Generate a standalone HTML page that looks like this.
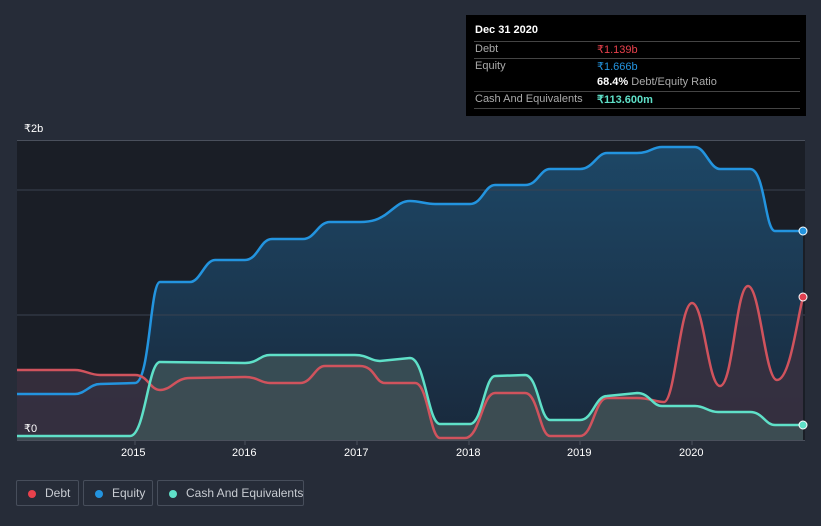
<!DOCTYPE html><html><head><meta charset="utf-8"><style>
body{margin:0;width:821px;height:526px;background:#262c38;font-family:"Liberation Sans",sans-serif;overflow:hidden;position:relative}
.tip{position:absolute;left:466px;top:15px;width:340px;height:101px;background:#000;color:#fff;font-size:11px}
.tip .r{position:absolute;left:8px;width:326px;border-top:1px solid #444}
.tip span{position:absolute;white-space:nowrap}
.leg{position:absolute;top:480px;height:26px;border:1px solid #474e5b;border-radius:2px;color:#c8ccd2;font-size:12px;line-height:24px;box-sizing:border-box;white-space:nowrap}
.leg i{position:absolute;left:11px;top:9px;width:8px;height:8px;border-radius:50%}
.ax{position:absolute;color:#fff;font-size:11px}
</style></head><body>
<svg width="821" height="526" style="position:absolute;left:0;top:0">
<defs>
<linearGradient id="ge" x1="0" y1="0" x2="0" y2="1"><stop offset="0" stop-color="#1d4766"/><stop offset="1" stop-color="#19293c"/></linearGradient>
</defs>
<rect x="17" y="140" width="788" height="300" fill="#1a1e26"/>
<path d="M17,394 L75,394 C85,394 90,384 100,384 L135,383 C150,383 150,282 160,282 L190,282 C200,282 205,260 215,260 L245,260 C258,260 260,239 272,239 L303,239 C315,239 318,222 330,222 L360,222 C375,222 380,218 385,215 C395,208 400,201 410,201 C420,201 425,204 435,204 L470,204 C482,204 485,185 495,185 L525,185 C538,185 540,169 550,169 L580,169 C593,169 597,153 607,153 L637,153 C650,153 652,147 662,147 L695,147 C705,147 710,169 720,169 L750,169 C765,169 765,231 775,231 L803,231 L803,440 L17,440Z" fill="url(#ge)"/>
<line x1="17" y1="190" x2="805" y2="190" stroke="#3a4250" stroke-width="1"/>
<line x1="17" y1="315" x2="805" y2="315" stroke="#3a4250" stroke-width="1"/>
<line x1="17" y1="140.5" x2="805" y2="140.5" stroke="#4a505c" stroke-width="1"/>
<path d="M17,370 L75,370 C85,370 90,375 100,375 L135,375 C148,375 150,390 160,390 C172,390 175,378 190,378 L245,377 C258,377 260,383 270,383 L300,383 C312,383 315,366 325,366 L360,366 C375,366 375,383 385,383 L415,383 C428,383 430,438 440,438 L465,438 C480,438 482,393 495,393 L525,393 C538,393 540,436 550,436 L580,436 C593,436 595,398 607,398 L637,398 C650,398 655,402 664,402 C675,402 680,303 692,303 C704,303 708,386 720,386 C733,386 736,286 748,286 C760,286 765,380 777,380 C790,380 797,320 803,297 L803,440 L17,440Z" fill="#3a3040" fill-opacity="0.85"/>
<path d="M17,436 L130,436 C145,436 148,362 160,362 L245,363 C258,363 260,355 270,355 L355,355 C368,355 370,361 380,361 L410,358 C425,358 428,424 440,424 L470,424 C482,424 485,376 495,376 L525,375 C538,375 540,420 550,420 L580,420 C593,420 595,396 607,396 L637,393 C650,393 652,406 662,406 L695,406 C705,406 708,412 718,412 L750,412 C763,412 765,425 775,425 L803,425 L803,440 L17,440Z" fill="#3f5458" fill-opacity="0.8"/>
<g fill="none" stroke-width="2.5" stroke-linejoin="round">
<path d="M17,394 L75,394 C85,394 90,384 100,384 L135,383 C150,383 150,282 160,282 L190,282 C200,282 205,260 215,260 L245,260 C258,260 260,239 272,239 L303,239 C315,239 318,222 330,222 L360,222 C375,222 380,218 385,215 C395,208 400,201 410,201 C420,201 425,204 435,204 L470,204 C482,204 485,185 495,185 L525,185 C538,185 540,169 550,169 L580,169 C593,169 597,153 607,153 L637,153 C650,153 652,147 662,147 L695,147 C705,147 710,169 720,169 L750,169 C765,169 765,231 775,231 L803,231" stroke="#2394df"/>
<path d="M17,370 L75,370 C85,370 90,375 100,375 L135,375 C148,375 150,390 160,390 C172,390 175,378 190,378 L245,377 C258,377 260,383 270,383 L300,383 C312,383 315,366 325,366 L360,366 C375,366 375,383 385,383 L415,383 C428,383 430,438 440,438 L465,438 C480,438 482,393 495,393 L525,393 C538,393 540,436 550,436 L580,436 C593,436 595,398 607,398 L637,398 C650,398 655,402 664,402 C675,402 680,303 692,303 C704,303 708,386 720,386 C733,386 736,286 748,286 C760,286 765,380 777,380 C790,380 797,320 803,297" stroke="#d0535d"/>
<path d="M17,436 L130,436 C145,436 148,362 160,362 L245,363 C258,363 260,355 270,355 L355,355 C368,355 370,361 380,361 L410,358 C425,358 428,424 440,424 L470,424 C482,424 485,376 495,376 L525,375 C538,375 540,420 550,420 L580,420 C593,420 595,396 607,396 L637,393 C650,393 652,406 662,406 L695,406 C705,406 708,412 718,412 L750,412 C763,412 765,425 775,425 L803,425" stroke="#5fe0c8"/>
</g>
<circle cx="803" cy="231" r="4" fill="#2394df" stroke="#fff" stroke-width="1"/>
<circle cx="803" cy="297" r="4" fill="#e04050" stroke="#fff" stroke-width="1"/>
<circle cx="803" cy="425" r="4" fill="#5fe0c8" stroke="#fff" stroke-width="1"/>
<line x1="17" y1="440.5" x2="805" y2="440.5" stroke="#4a505c"/>
<g stroke="#4a505c"><line x1="135" y1="441" x2="135" y2="445"/><line x1="245" y1="441" x2="245" y2="445"/><line x1="357" y1="441" x2="357" y2="445"/><line x1="469" y1="441" x2="469" y2="445"/><line x1="580" y1="441" x2="580" y2="445"/><line x1="692" y1="441" x2="692" y2="445"/></g>
</svg>
<div class="ax" style="left:24px;top:122px">₹2b</div>
<div class="ax" style="left:24px;top:422px">₹0</div>
<div class="ax" style="left:121px;top:447px">2015</div>
<div class="ax" style="left:232px;top:447px">2016</div>
<div class="ax" style="left:344px;top:447px">2017</div>
<div class="ax" style="left:456px;top:447px">2018</div>
<div class="ax" style="left:567px;top:447px">2019</div>
<div class="ax" style="left:679px;top:447px">2020</div>
<div class="tip">
<span style="left:9px;top:9px;font-weight:bold">Dec 31 2020</span>
<div class="r" style="top:26px"></div>
<span style="left:9px;top:28px;color:#aaa">Debt</span><span style="left:131px;top:28px;color:#e8414c">₹1.139b</span>
<div class="r" style="top:43px"></div>
<span style="left:9px;top:45px;color:#aaa">Equity</span><span style="left:131px;top:45px;color:#2394df">₹1.666b</span>
<span style="left:131px;top:61px"><b>68.4%</b> <span style="position:static;color:#aaa">Debt/Equity Ratio</span></span>
<div class="r" style="top:76px"></div>
<span style="left:9px;top:78px;color:#aaa">Cash And Equivalents</span><span style="left:131px;top:78px;color:#5fe0c8;font-weight:bold">₹113.600m</span>
<div class="r" style="top:93px"></div>
</div>
<div class="leg" style="left:16px;width:63px"><i style="background:#e8414c"></i><span style="position:absolute;left:28px">Debt</span></div>
<div class="leg" style="left:83px;width:70px"><i style="background:#2394df"></i><span style="position:absolute;left:28px">Equity</span></div>
<div class="leg" style="left:157px;width:147px"><i style="background:#5fe0c8"></i><span style="position:absolute;left:28px">Cash And Equivalents</span></div>
</body></html>
